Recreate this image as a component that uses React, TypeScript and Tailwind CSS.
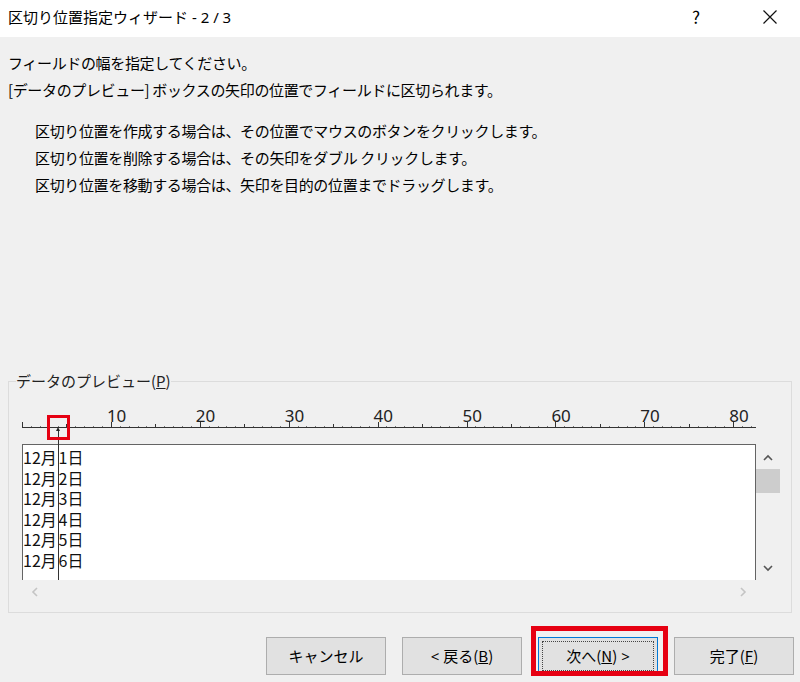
import React from 'react';

const FONT = '"Noto Sans CJK JP", "Noto Sans", sans-serif';
const CHAR = 8.89;

const Chevron = ({ dir, color }: { dir: 'up' | 'down' | 'left' | 'right'; color: string }) => {
  const pts: Record<string, string> = {
    up: '1,6 5,2 9,6',
    down: '1,2 5,6 9,2',
    left: '6,1 2,5 6,9',
    right: '2,1 6,5 2,9',
  };
  const wide = dir === 'up' || dir === 'down';
  return (
    <svg width={wide ? 10 : 8} height={wide ? 8 : 10} viewBox={wide ? '0 0 10 8' : '0 0 8 10'}>
      <polyline points={pts[dir]} fill="none" stroke={color} strokeWidth="1.6" />
    </svg>
  );
};

const Ruler = () => {
  const ticks = [];
  for (let i = 0; i <= 82; i++) {
    const x = Math.round(i * CHAR) + 0.5;
    const h = i % 10 === 0 ? 5 : i % 5 === 0 ? 3 : 1;
    ticks.push(<line key={i} x1={x} x2={x} y1={36 - h} y2={36} stroke={h === 1 ? '#777' : '#333'} strokeWidth="1" />);
  }
  const labels = [10, 20, 30, 40, 50, 60, 70, 80];
  return (
    <svg width="734" height="53" className="block">
      <line x1="0" x2="734" y1="36.5" y2="36.5" stroke="#333" strokeWidth="1" />
      {ticks}
      {labels.map((n) => (
        <text key={n} x={n * CHAR - 4} y="31" fontSize="17" fill="#222" fontFamily='"Noto Sans", sans-serif'>
          {n}
        </text>
      ))}
    </svg>
  );
};

const Btn = ({ children, primary }: { children: React.ReactNode; primary?: boolean }) => (
  <div className="relative">
    <button
      className={`w-[120px] h-[38px] bg-[#e1e1e1] text-[15px] text-black flex items-center justify-center border ${
        primary ? 'border-[#0078d7] p-[3px]' : 'border-[#adadad]'
      }`}
    >
      {primary ? (
        <span className="w-full h-full border border-dotted border-[#444] flex items-center justify-center">{children}</span>
      ) : (
        children
      )}
    </button>
    {primary && (
      <div className="absolute left-[-7px] top-[-11px] w-[137px] h-[50px] border-[5px] border-[#e60012] pointer-events-none" />
    )}
  </div>
);

export default function App() {
  const rows = ['1日', '2日', '3日', '4日', '5日', '6日'];
  return (
    <div className="w-[800px] h-[682px] bg-[#f0f0f0] flex flex-col text-black overflow-hidden" style={{ fontFamily: FONT }}>
      {/* title bar */}
      <div className="h-[37px] bg-white flex items-center pl-2 pb-[3px] shrink-0">
        <span className="text-[15px]">
          区切り位置指定ウィザード<span className="font-['Noto_Sans']"> - 2 / 3</span>
        </span>
        <span className="ml-auto text-[17px] w-[20px] text-center mr-[57px]">?</span>
        <svg width="14" height="14" viewBox="0 0 14 14" className="mr-[23px]">
          <path d="M0.5 0.5 L13.5 13.5 M13.5 0.5 L0.5 13.5" stroke="#111" strokeWidth="1.2" />
        </svg>
      </div>

      {/* instructions */}
      <div className="pt-[12px] pl-2 text-[15px] leading-[27px] tracking-[-0.35px]">
        <p>フィールドの幅を指定してください。</p>
        <p>[データのプレビュー] ボックスの矢印の位置でフィールドに区切られます。</p>
        <div className="mt-[14px] pl-[27px]">
          <p>区切り位置を作成する場合は、その位置でマウスのボタンをクリックします。</p>
          <p>区切り位置を削除する場合は、その矢印をダブル クリックします。</p>
          <p>区切り位置を移動する場合は、矢印を目的の位置までドラッグします。</p>
        </div>
      </div>

      <div className="flex-1" />

      {/* preview group */}
      <fieldset className="mx-2 border border-[#dcdcdc] px-[7px] pb-[8px] shrink-0">
        <legend className="text-[15px] leading-[20px] px-0 text-[#222]">
          データのプレビュー(<span className="underline">P</span>)
        </legend>
        <div className="relative pl-[6px] pr-[4px]">
          <Ruler />
          <div className="flex h-[136px]">
            <div className="flex-1 bg-white border-l border-t border-r border-[#646464] pt-[2px] text-[16px] leading-[20.6px] text-[#111]">
              {rows.map((r) => (
                <div key={r} className="flex h-[20.6px] items-center">
                  <span className="w-[34.6px] shrink-0">12月</span>
                  <span className="pl-[1px]">{r}</span>
                </div>
              ))}
            </div>
            <div className="w-[24px] flex flex-col">
              <div className="h-[24px] flex items-center justify-center pt-[4px]">
                <Chevron dir="up" color="#555" />
              </div>
              <div className="h-[24px] bg-[#cdcdcd] mt-[1px]" />
              <div className="flex-1" />
              <div className="h-[24px] flex items-center justify-center">
                <Chevron dir="down" color="#555" />
              </div>
            </div>
          </div>
          <div className="h-[24px] flex items-center justify-between mr-[24px] px-[9px]">
            <Chevron dir="left" color="#c4c4c4" />
            <Chevron dir="right" color="#c4c4c4" />
          </div>

          {/* column break marker */}
          <div className="absolute left-[42px] top-[39px] w-px h-[150px] bg-[#333]" />
          <div className="absolute left-[40px] top-[36px] w-0 h-0 border-l-[2.5px] border-r-[2.5px] border-b-[4px] border-l-transparent border-r-transparent border-b-[#222]" />
          <div className="absolute left-[31px] top-[24px] w-[23px] h-[25px] border-[3px] border-[#e60012]" />
        </div>
      </fieldset>

      {/* buttons */}
      <div className="flex justify-end gap-[16px] pr-[6px] mt-[24px] mb-[7px] shrink-0">
        <Btn>キャンセル</Btn>
        <Btn>
          <span className="font-['Noto_Sans']">&lt;&nbsp;</span>戻る(<span className="underline">B</span>)
        </Btn>
        <Btn primary>
          次へ(<span className="underline">N</span>)<span className="font-['Noto_Sans']">&nbsp;&gt;</span>
        </Btn>
        <Btn>
          完了(<span className="underline">F</span>)
        </Btn>
      </div>
    </div>
  );
}
